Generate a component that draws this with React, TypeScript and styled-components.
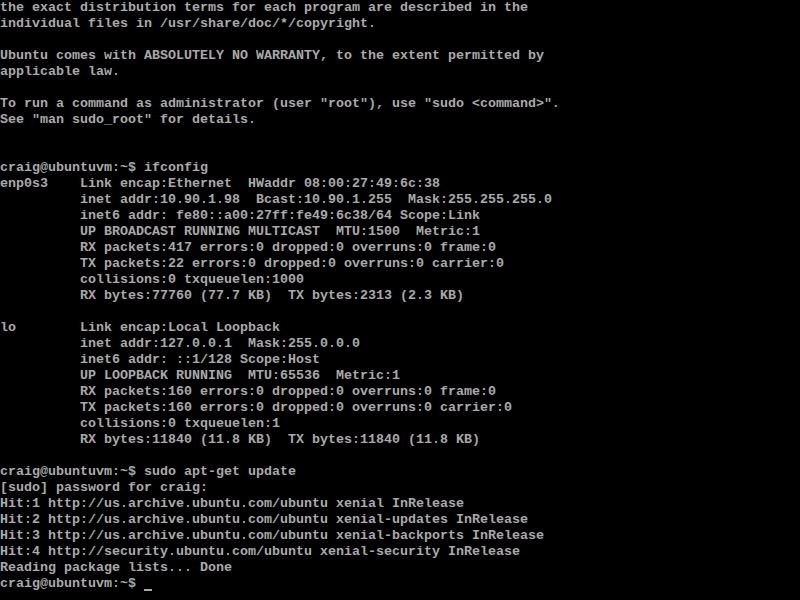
import React from "react";
import styled, { createGlobalStyle } from "styled-components";

const Global = createGlobalStyle`
  html, body { margin: 0; padding: 0; background: #000; }
  body { width: 800px; height: 600px; overflow: hidden; }
`;

const Screen = styled.div`
  width: 800px;
  height: 600px;
  background: #000;
  color: #aaaaaa;
  font-family: "Liberation Mono", "DejaVu Sans Mono", monospace;
  font-size: 13.333px;
  font-weight: bold;
  line-height: 16px;
  overflow: hidden;
`;

const Line = styled.div`
  height: 16px;
  white-space: pre;
`;

const Cursor = styled.span`
  display: inline-block;
  width: 8px;
  height: 16px;
  vertical-align: top;
  position: relative;
  &::after {
    content: "";
    position: absolute;
    left: 0;
    right: 0;
    top: 13px;
    height: 2px;
    background: #aaaaaa;
  }
`;

const lines: string[] = [
  "the exact distribution terms for each program are described in the",
  "individual files in /usr/share/doc/*/copyright.",
  "",
  "Ubuntu comes with ABSOLUTELY NO WARRANTY, to the extent permitted by",
  "applicable law.",
  "",
  'To run a command as administrator (user "root"), use "sudo <command>".',
  'See "man sudo_root" for details.',
  "",
  "",
  "craig@ubuntuvm:~$ ifconfig",
  "enp0s3    Link encap:Ethernet  HWaddr 08:00:27:49:6c:38",
  "          inet addr:10.90.1.98  Bcast:10.90.1.255  Mask:255.255.255.0",
  "          inet6 addr: fe80::a00:27ff:fe49:6c38/64 Scope:Link",
  "          UP BROADCAST RUNNING MULTICAST  MTU:1500  Metric:1",
  "          RX packets:417 errors:0 dropped:0 overruns:0 frame:0",
  "          TX packets:22 errors:0 dropped:0 overruns:0 carrier:0",
  "          collisions:0 txqueuelen:1000",
  "          RX bytes:77760 (77.7 KB)  TX bytes:2313 (2.3 KB)",
  "",
  "lo        Link encap:Local Loopback",
  "          inet addr:127.0.0.1  Mask:255.0.0.0",
  "          inet6 addr: ::1/128 Scope:Host",
  "          UP LOOPBACK RUNNING  MTU:65536  Metric:1",
  "          RX packets:160 errors:0 dropped:0 overruns:0 frame:0",
  "          TX packets:160 errors:0 dropped:0 overruns:0 carrier:0",
  "          collisions:0 txqueuelen:1",
  "          RX bytes:11840 (11.8 KB)  TX bytes:11840 (11.8 KB)",
  "",
  "craig@ubuntuvm:~$ sudo apt-get update",
  "[sudo] password for craig:",
  "Hit:1 http://us.archive.ubuntu.com/ubuntu xenial InRelease",
  "Hit:2 http://us.archive.ubuntu.com/ubuntu xenial-updates InRelease",
  "Hit:3 http://us.archive.ubuntu.com/ubuntu xenial-backports InRelease",
  "Hit:4 http://security.ubuntu.com/ubuntu xenial-security InRelease",
  "Reading package lists... Done",
];

export default function App() {
  return (
    <>
      <Global />
      <Screen>
        {lines.map((l, i) => (
          <Line key={i}>{l}</Line>
        ))}
        <Line>
          {"craig@ubuntuvm:~$ "}
          <Cursor />
        </Line>
      </Screen>
    </>
  );
}
